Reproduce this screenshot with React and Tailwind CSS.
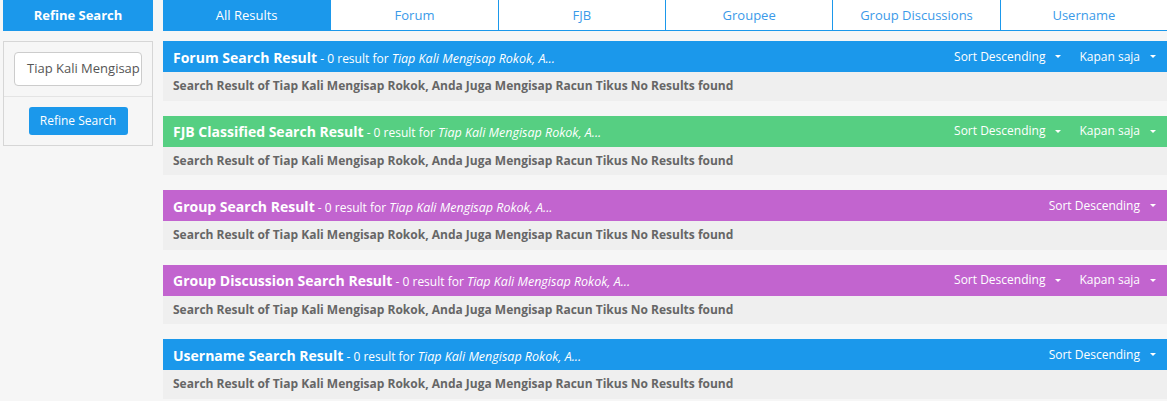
import React from "react";

const QUERY = "Tiap Kali Mengisap Rokok, Anda Juga Mengisap Racun Tikus";

const tabs = ["All Results", "Forum", "FJB", "Groupee", "Group Discussions", "Username"];

const sections = [
  { title: "Forum Search Result", bg: "bg-[#1b98eb]", time: true },
  { title: "FJB Classified Search Result", bg: "bg-[#56cf82]", time: true },
  { title: "Group Search Result", bg: "bg-[#c264cf]", time: false },
  { title: "Group Discussion Search Result", bg: "bg-[#c264cf]", time: true },
  { title: "Username Search Result", bg: "bg-[#1b98eb]", time: false },
];

function Caret() {
  return (
    <span className="inline-block ml-[10px] w-0 h-0 border-l-[3px] border-r-[3px] border-t-[3px] border-l-transparent border-r-transparent border-t-white align-middle" />
  );
}

function Dropdown({ label }) {
  return (
    <span className="flex items-center text-[12px] text-white">
      {label}
      <Caret />
    </span>
  );
}

function ResultSection({ title, bg, time }) {
  return (
    <div>
      <div className={`${bg} h-[31px] flex items-center justify-between pl-[10px] pr-[11px] text-white`}>
        <div className="whitespace-nowrap">
          <span className="text-[14px] font-bold">{title}</span>
          <span className="text-[12px]"> - 0 result for </span>
          <span className="text-[12.5px] italic">Tiap Kali Mengisap Rokok, A...</span>
        </div>
        <div className="flex items-center gap-[18px]">
          <Dropdown label="Sort Descending" />
          {time && <Dropdown label="Kapan saja" />}
        </div>
      </div>
      <div className="bg-[#efefef] h-[28.5px] flex items-center px-[10px] text-[12px] font-bold text-[#666666]">
        Search Result of {QUERY} No Results found
      </div>
    </div>
  );
}

export default function App() {
  return (
    <div
      className="bg-[#f6f6f6] h-[401px] flex gap-[10px] pl-[3px] overflow-hidden"
      style={{ fontFamily: '"Open Sans", "Noto Sans", sans-serif' }}
    >
      {/* Sidebar */}
      <aside className="w-[150px] shrink-0">
        <div className="bg-[#1b98eb] h-[31px] flex items-center justify-center text-white text-[13px] font-bold">
          Refine Search
        </div>
        <div className="mt-[10px] border border-[#d6d6d6] bg-[#f6f6f6]">
          <div className="px-[10px] pt-[10px] pb-[10px] border-b border-[#e4e4e4]">
            <div className="h-[34px] bg-white border border-[#cccccc] rounded-[4px] flex items-center pl-[12px] overflow-hidden whitespace-nowrap text-[13px] text-[#555555]">
              Tiap Kali Mengisap
            </div>
          </div>
          <div className="flex justify-center pt-[10px] pb-[10px]">
            <button className="bg-[#1b98eb] text-white text-[12px] rounded-[3px] w-[99px] h-[28px]">
              Refine Search
            </button>
          </div>
        </div>
      </aside>

      {/* Main */}
      <main className="flex-1 min-w-0">
        <nav className="grid grid-cols-6 h-[31px] border-b border-[#1b98eb] bg-white">
          {tabs.map((t, i) => (
            <div
              key={t}
              className={`flex items-center justify-center pt-[1px] text-[13px] ${
                i === 0 ? "bg-[#1b98eb] text-white" : "text-[#3a9ae9] border-l border-[#1b98eb]"
              }`}
            >
              {t}
            </div>
          ))}
        </nav>
        <div className="mt-[10px] flex flex-col gap-[15px]">
          {sections.map((s) => (
            <ResultSection key={s.title} {...s} />
          ))}
        </div>
      </main>
    </div>
  );
}
